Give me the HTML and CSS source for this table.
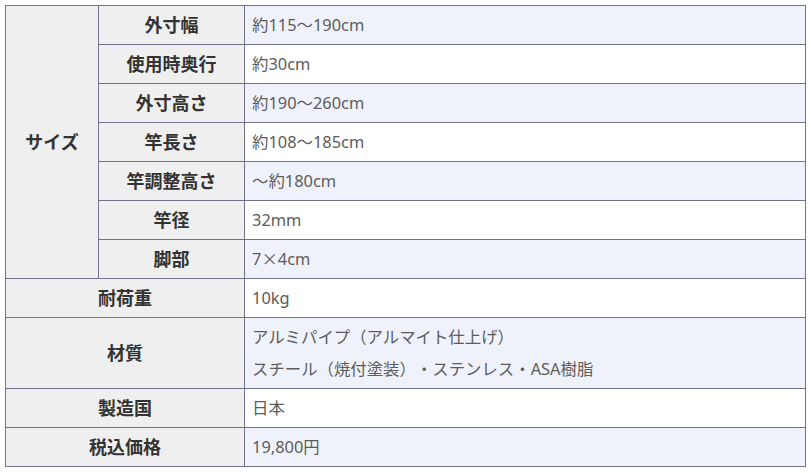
FILE: index.html
```html
<!DOCTYPE html>
<html lang="ja">
<head>
<meta charset="utf-8">
<link rel="stylesheet" href="styles.css">
</head>
<body>
<table class="spec">
  <colgroup>
    <col class="c1"><col class="c2"><col class="c3">
  </colgroup>
  <tbody>
    <tr class="odd"><th rowspan="7">サイズ</th><th>外寸幅</th><td>約115～190cm</td></tr>
    <tr><th>使用時奥行</th><td>約30cm</td></tr>
    <tr class="odd"><th>外寸高さ</th><td>約190～260cm</td></tr>
    <tr><th>竿長さ</th><td>約108～185cm</td></tr>
    <tr class="odd"><th>竿調整高さ</th><td>～約180cm</td></tr>
    <tr><th>竿径</th><td>32mm</td></tr>
    <tr class="odd"><th>脚部</th><td>7<span class="times">×</span>4cm</td></tr>
    <tr><th colspan="2">耐荷重</th><td>10kg</td></tr>
    <tr class="odd"><th colspan="2">材質</th><td>アルミパイプ（アルマイト仕上げ）<br>スチール（焼付塗装）・ステンレス・ASA樹脂</td></tr>
    <tr><th colspan="2">製造国</th><td>日本</td></tr>
    <tr class="odd"><th colspan="2">税込価格</th><td>19,800円</td></tr>
  </tbody>
</table>
</body>
</html>
```
FILE: styles.css
```css
html, body {
  margin: 0;
  background: #ffffff;
}
body {
  padding: 5px;
  font-family: "Noto Sans", "Noto Sans CJK JP", sans-serif;
  font-size: 16px;
}
.spec {
  border-collapse: collapse;
  width: 800px;
  table-layout: fixed;
}
.c1 { width: 93px; }
.c2 { width: 146px; }
.c3 { width: 561px; }
.spec th, .spec td {
  border: 1px solid #72728f;
  height: 32px;
  line-height: 32px;
  padding: 3px 7px;
  text-spacing-trim: space-all;
  box-sizing: content-box;
}
.spec th {
  background: #efefef;
  color: #333333;
  font-size: 18px;
  font-weight: 700;
  text-align: center;
}
.spec td {
  background: #ffffff;
  color: #5c5c5c;
  font-size: 16.4px;
  font-weight: 400;
  text-align: left;
}
.spec tr.odd td {
  background: #f0f2fb;
}
.times {
  font-family: "Noto Sans CJK JP", sans-serif;
  line-height: 1;
}
```
